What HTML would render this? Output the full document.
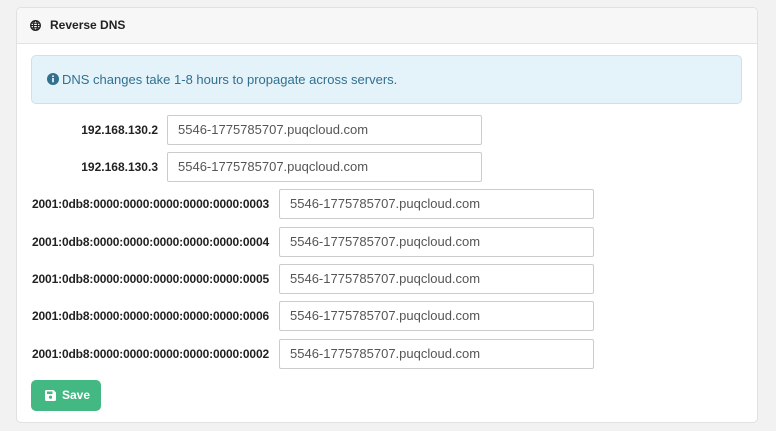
<!DOCTYPE html><html><head><style>
body{margin:0;width:776px;height:431px;background:#f2f2f2;font-family:"Liberation Sans",sans-serif;position:relative;overflow:hidden}
.card{position:absolute;left:16px;top:7px;width:740px;height:414px;background:#fff;border:1px solid #e1e1e1;border-radius:5px}
.hd{height:35px;background:#f7f7f7;border-bottom:1px solid #e3e3e3;border-radius:5px 5px 0 0;font-size:12px;font-weight:bold;color:#222;line-height:35px;padding-left:33px;position:relative}
.hd svg{position:absolute;left:13px;top:12px}
.alert{position:absolute;left:14px;top:47px;width:709px;height:47px;background:#e4f3fa;border:1px solid #bfe6f2;border-radius:5px;color:#31708f;font-size:13px;line-height:47px}
.alert span{position:absolute;left:30px}
.alert svg{position:absolute;left:15px;top:17px}
.lbl{position:absolute;font-size:12px;font-weight:bold;color:#222;text-align:right;line-height:30px;white-space:nowrap}
.v6{letter-spacing:-0.15px}
.in{position:absolute;height:28px;border:1px solid #ccc;border-radius:2px;font-size:13px;color:#555;line-height:28px;padding-left:10px;box-sizing:content-box;background:#fff}
.btn{position:absolute;left:14px;top:372px;width:70px;height:31px;background:#43b883;border-radius:5px;color:#fff;font-size:12px;font-weight:bold;line-height:31px}
.btn svg{position:absolute;left:14px;top:10px}
.btn span{position:absolute;left:31px}
</style></head><body>
<div class="card">
<div class="hd"><svg width="11" height="11" viewBox="0 0 12 12"><circle cx="6" cy="6" r="5.2" fill="none" stroke="#222" stroke-width="1.5"/><ellipse cx="6" cy="6" rx="2.2" ry="5.2" fill="none" stroke="#222" stroke-width="1.3"/><path d="M1 6H11M1.8 3.5H10.2M1.8 8.5H10.2" stroke="#222" stroke-width="1.1"/></svg>Reverse DNS</div>
<div class="alert"><svg width="12" height="12" viewBox="0 0 12 12"><circle cx="6" cy="6" r="6" fill="#31708f"/><rect x="5.2" y="5" width="1.6" height="4.3" fill="#fff"/><circle cx="6" cy="3.2" r="0.9" fill="#fff"/></svg><span>DNS changes take 1-8 hours to propagate across servers.</span></div>
<div class="lbl" style="left:0;width:141px;top:107px">192.168.130.2</div><div class="in" style="left:150px;top:107px;width:303px">5546-1775785707.puqcloud.com</div>
<div class="lbl" style="left:0;width:141px;top:144px">192.168.130.3</div><div class="in" style="left:150px;top:144px;width:303px">5546-1775785707.puqcloud.com</div>
<div class="lbl v6" style="left:0;width:252px;top:181px">2001:0db8:0000:0000:0000:0000:0000:0003</div><div class="in" style="left:262px;top:181px;width:303px">5546-1775785707.puqcloud.com</div>
<div class="lbl v6" style="left:0;width:252px;top:219px">2001:0db8:0000:0000:0000:0000:0000:0004</div><div class="in" style="left:262px;top:219px;width:303px">5546-1775785707.puqcloud.com</div>
<div class="lbl v6" style="left:0;width:252px;top:256px">2001:0db8:0000:0000:0000:0000:0000:0005</div><div class="in" style="left:262px;top:256px;width:303px">5546-1775785707.puqcloud.com</div>
<div class="lbl v6" style="left:0;width:252px;top:293px">2001:0db8:0000:0000:0000:0000:0000:0006</div><div class="in" style="left:262px;top:293px;width:303px">5546-1775785707.puqcloud.com</div>
<div class="lbl v6" style="left:0;width:252px;top:331px">2001:0db8:0000:0000:0000:0000:0000:0002</div><div class="in" style="left:262px;top:331px;width:303px">5546-1775785707.puqcloud.com</div>
<div class="btn"><svg width="11" height="11" viewBox="0 0 11 11"><path d="M0 1.5Q0 0 1.5 0H8.5L11 2.5V9.5Q11 11 9.5 11H1.5Q0 11 0 9.5Z" fill="#fff"/><rect x="2" y="1.5" width="5.5" height="2.5" fill="#43b883"/><circle cx="5.5" cy="7.2" r="1.6" fill="#43b883"/></svg><span>Save</span></div>
</div>
</body></html>
